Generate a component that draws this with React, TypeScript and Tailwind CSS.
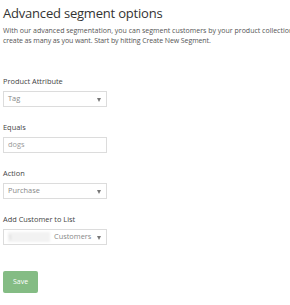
const fields = [
  { label: "Product Attribute", kind: "select", value: "Tag" },
  { label: "Equals", kind: "input", value: "dogs" },
  { label: "Action", kind: "select", value: "Purchase" },
  { label: "Add Customer to List", kind: "list", value: "Customers" },
];

const Arrow = () => (
  <span className="absolute right-[5px] top-[6px] w-0 h-0 border-l-[2px] border-r-[2px] border-t-[4px] border-l-transparent border-r-transparent border-t-[#777]" />
);

const App = () => {
  return (
    <div className="w-[290px] h-[305px] overflow-hidden bg-white px-[3px] font-['Open_Sans',sans-serif]">
      <h1 className="mt-[3px] text-[13px] leading-[20px] tracking-[-0.2px] text-[#333] font-medium whitespace-nowrap">
        Advanced segment options
      </h1>
      <p className="mt-[3px] text-[7px] leading-[10px] text-[#555] whitespace-nowrap">
        With our advanced segmentation, you can segment customers by your product collections,
        <br />
        <span className="tracking-[-0.1px]">create as many as you want. Start by hitting Create New Segment.</span>
      </p>

      <div className="mt-[30px] flex flex-col gap-[15px]">
        {fields.map((f) => (
          <div key={f.label}>
            <div className="text-[7.4px] leading-[10px] text-[#444] mb-[5px]">{f.label}</div>
            <div className="relative w-[104px] h-[16px] border border-[#dcdcdc] bg-white flex items-center px-[4px] text-[7.4px] text-[#888]">
              {f.kind === "list" ? (
                <>
                  <span className="w-[42px] h-[10px] bg-[#f2f2f2] blur-[1px] text-[#ccc]">1</span>
                  <span className="ml-[4px]">{f.value}</span>
                </>
              ) : (
                <span className={f.kind === "input" ? "text-[#999]" : ""}>{f.value}</span>
              )}
              {f.kind !== "input" && <Arrow />}
            </div>
          </div>
        ))}
      </div>

      <button className="mt-[26px] w-[35px] h-[22px] rounded-[2px] bg-[#84bc84] text-white text-[7px]">
        Save
      </button>
    </div>
  );
};

export default App;
